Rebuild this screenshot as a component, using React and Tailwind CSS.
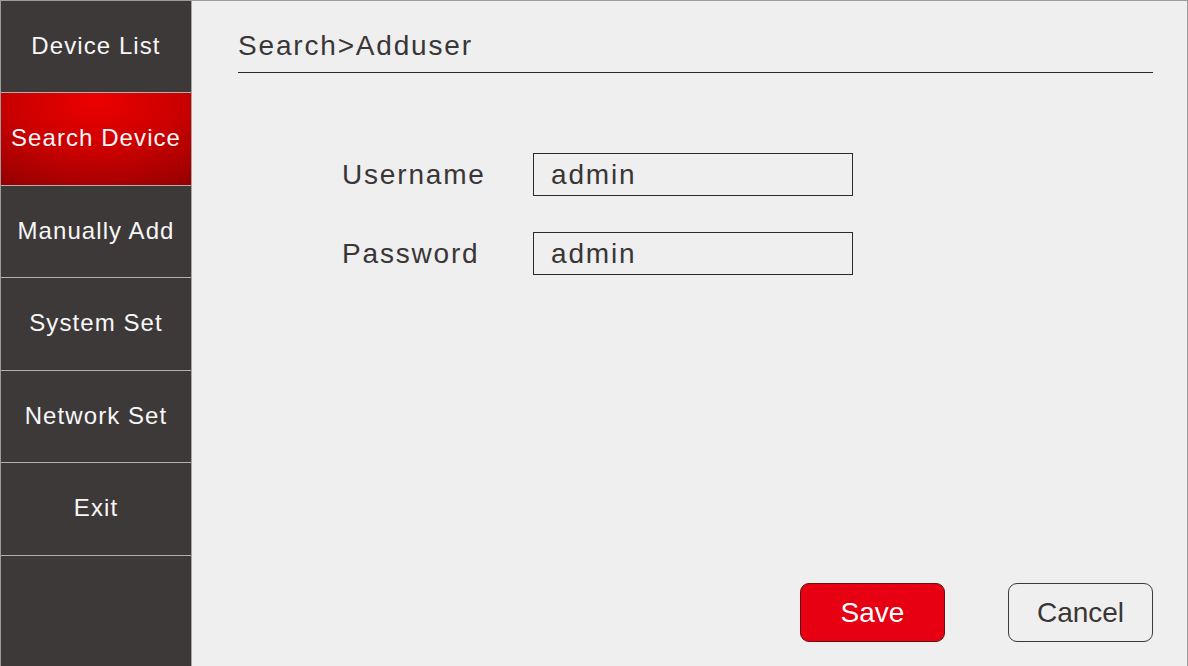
import React, { useState } from "react";

const menu = [
  { label: "Device List", h: "h-[92px]" },
  { label: "Search Device", h: "h-[93px]" },
  { label: "Manually Add", h: "h-[92px]" },
  { label: "System Set", h: "h-[93px]" },
  { label: "Network Set", h: "h-[92px]" },
  { label: "Exit", h: "h-[93px]" },
];

const Field = ({ label, value }) => (
  <div className="flex items-center">
    <div className="w-[191px] text-[28px] leading-[32px] tracking-[0.065em] text-[#3a3636]">
      {label}
    </div>
    <div className="w-[320px] h-[43px] border-[1.5px] border-[#2b2b2b] flex items-center pl-[17px] text-[28px] tracking-[0.065em] text-[#3a3636]">
      {value}
    </div>
  </div>
);

export default function App() {
  const [active, setActive] = useState(1);

  return (
    <div
      className="w-[1188px] h-[666px] flex border-t border-l border-r border-[#9c9c9c] bg-[#efefef] overflow-hidden"
      style={{ fontFamily: '"Liberation Sans", Arial, sans-serif' }}
    >
      {/* sidebar */}
      <div className="w-[191px] shrink-0 flex flex-col bg-[#3e3939] border-r border-[#a8a4a4]">
        {menu.map((m, i) => (
          <button
            key={m.label}
            onClick={() => setActive(i)}
            className={
              "flex items-center justify-center pb-[2px] border-b border-[#b5adad] text-[24px] tracking-[0.045em] text-[#f7f7f7] " +
              m.h +
              (active === i
                ? " bg-[radial-gradient(ellipse_95%_120%_at_50%_8%,#ec0000_0%,#cc0000_45%,#8c0000_100%)]"
                : "")
            }
          >
            {m.label}
          </button>
        ))}
        <div className="flex-1" />
      </div>

      {/* main */}
      <div className="flex-1 flex flex-col pl-[46px] pr-[34px]">
        <div className="pt-[28px] pb-[10px] border-b-[1.5px] border-[#2a2a2a] text-[28px] leading-[33px] tracking-[0.065em] text-[#3a3636]">
          Search&gt;Adduser
        </div>

        <div className="flex flex-col gap-[36px] mt-[80px] pl-[104px]">
          <Field label="Username" value="admin" />
          <Field label="Password" value="admin" />
        </div>

        <div className="flex-1" />

        <div className="flex justify-end gap-[63px] mb-[24px]">
          <button className="w-[145px] h-[59px] rounded-[9px] bg-[#e60012] border border-[#6a1010] text-white text-[28px]">
            Save
          </button>
          <button className="w-[145px] h-[59px] rounded-[9px] bg-[#efefef] border border-[#3a3a3a] text-[#3a3636] text-[28px]">
            Cancel
          </button>
        </div>
      </div>
    </div>
  );
}
